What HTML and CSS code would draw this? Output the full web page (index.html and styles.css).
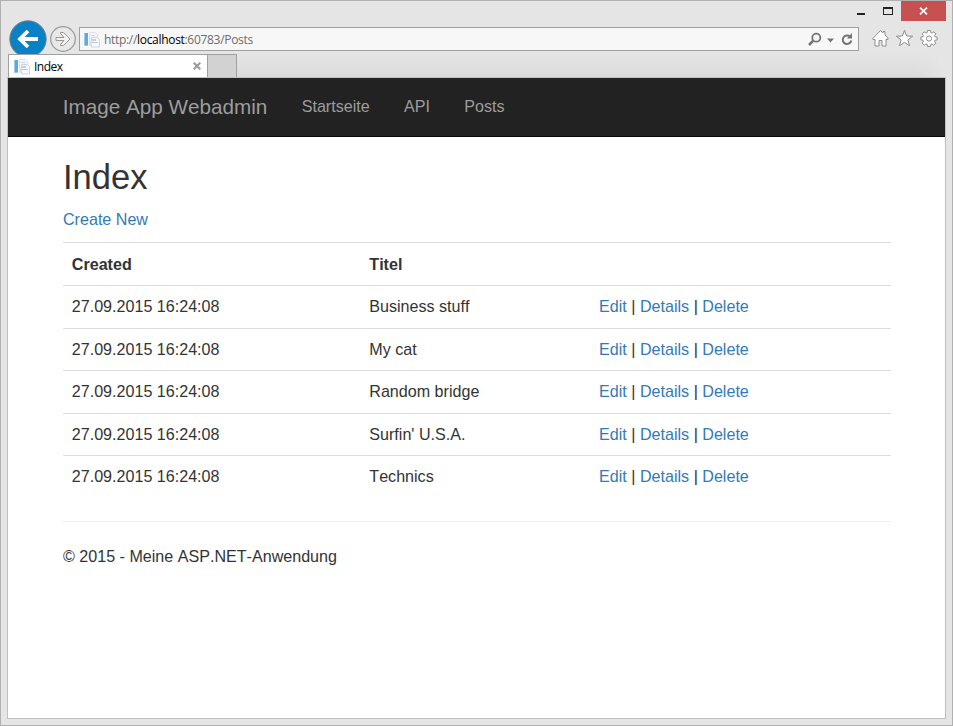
FILE: index.html
```html
<!DOCTYPE html>
<html lang="de">
<head>
<meta charset="utf-8">
<title>Index</title>
<link rel="stylesheet" href="styles.css">
</head>
<body>
<svg class="defs" width="0" height="0">
  <symbol id="doc" viewBox="0 0 16 16">
    <path d="M0 1h4v13H0z" fill="#9acbe9"/><path d="M1 1h3v12H1z" fill="#62a9da"/>
    <path d="M5.500 .5h6l2 2v11h-8z" fill="#f3f6fc" stroke="#dde3ee"/>
    <path d="M7 3.500h4" stroke="#ccd6e6"/>
    <path d="M7.500 5.500h6l2 2v7.500h-8z" fill="#f7f9fe" stroke="#cdd5e3"/>
    <path d="M8 7h4v2H8z" fill="#c3cee1"/>
    <path d="M8 10.500h6" stroke="#bcc8dc"/>
    <path d="M6 9.500h2v3H6z" fill="#d4dcea"/>
  </symbol>
</svg>
<div class="window">
  <div class="titlebar">
    <svg width="27" height="20" viewBox="0 0 27 20"><path d="M3 12h8v2H3z" fill="#222"/></svg>
    <svg width="20" height="20" viewBox="0 0 20 20"><path d="M2 6h10v8H2zM3 8v5h8V8z" fill="#222" fill-rule="evenodd"/></svg>
    <div class="close"><svg width="9" height="8" viewBox="0 0 9 8"><path d="M1 .7l7 6.600M8 .7L1 7.300" stroke="#fff" stroke-width="1.800"/></svg></div>
  </div>
  <div class="toolbar">
    <svg class="back" width="40" height="40" viewBox="0 0 40 40"><circle cx="20" cy="20" r="18.200" fill="#0882c4" stroke="#7a7f83"/><path d="M30 20H11.500M20 12l-8 8 8 8" fill="none" stroke="#fff" stroke-width="3.800"/></svg>
    <svg class="forward" width="28" height="28" viewBox="0 0 28 28"><circle cx="14" cy="14" r="12.300" fill="#e8e8e8" stroke="#999" stroke-width="1.200"/><path d="M7 12.500h8L11.500 8.500V7.500h3L21 14l-6.500 6.500h-3v-1l3.500-4H7z" fill="#f3f3f3" stroke="#999"/></svg>
    <div class="address">
      <svg class="favicon" width="16" height="16"><use href="#doc"/></svg>
      <span class="url">http://<b>localhost</b>:60783/Posts</span>
      <svg width="53" height="20" viewBox="0 0 53 20" fill="none" stroke="#757575"><circle cx="11.300" cy="8.700" r="4" stroke-width="1.800"/><path d="M8.200 11.700L4 16" stroke-width="2.600"/><path d="M22 9.500h7l-3.500 4z" fill="#757575" stroke="none"/><path d="M45 7.600A4.300 4.300 0 1 0 46.300 11.500" stroke-width="2"/><path d="M47 4v5.500h-5z" fill="#757575" stroke="none"/></svg>
    </div>
    <svg class="tools" width="68" height="20" viewBox="0 0 68 20" fill="#fdfdfd" stroke="#8e8e8e" stroke-linejoin="round">
      <path d="M.8 10.500L8.500 2.500l2.500 2.500V3.500h2v3.500l3 3v1.500h-2v6.500h-4V12.500h-3v5.500h-4V11.500h-2z"/>
      <path d="M32.500 2.300l2.100 5.700 6.100.2-4.800 3.700 1.700 5.900-5.100-3.400-5.100 3.400 1.700-5.900-4.800-3.700 6.100-.2z"/>
      <path d="M55.500 2.500h3l.4 2.200 1 .4 1.900-1.300 2 2-1.300 1.900.4 1 2.200.4v2.800l-2.200.4-.4 1 1.300 1.900-2 2-1.900-1.300-1 .4-.4 2.200h-3l-.4-2.200-1-.4-1.900 1.300-2-2 1.300-1.900-.4-1-2.200-.4V9.100l2.200-.4.4-1-1.300-1.900 2-2 1.900 1.300 1-.4z"/><circle cx="57" cy="10.500" r="2.600"/>
    </svg>
  </div>
  <div class="tabs">
    <div class="tab"><svg width="16" height="16"><use href="#doc"/></svg><span>Index</span><svg class="tabclose" width="8" height="8" viewBox="0 0 8 8"><path d="M.7.7l6.600 6.600M7.300.7L.7 7.300" stroke="#999" stroke-width="2"/></svg></div>
    <div class="newtab"></div>
    <div class="tabfill"></div>
  </div>
  <main class="viewport">
    <nav class="navbar">
      <a class="brand">Image App Webadmin</a>
      <a>Startseite</a>
      <a>API</a>
      <a>Posts</a>
    </nav>
    <div class="container">
      <h2>Index</h2>
      <p class="create"><a>Create New</a></p>
      <div class="table">
        <div class="row head"><span>Created</span><span>Titel</span><span></span></div>
        <div class="row"><span>27.09.2015 16:24:08</span><span>Business stuff</span><span><a>Edit</a> | <a>Details</a> | <a>Delete</a></span></div>
        <div class="row"><span>27.09.2015 16:24:08</span><span>My cat</span><span><a>Edit</a> | <a>Details</a> | <a>Delete</a></span></div>
        <div class="row"><span>27.09.2015 16:24:08</span><span>Random bridge</span><span><a>Edit</a> | <a>Details</a> | <a>Delete</a></span></div>
        <div class="row"><span>27.09.2015 16:24:08</span><span>Surfin' U.S.A.</span><span><a>Edit</a> | <a>Details</a> | <a>Delete</a></span></div>
        <div class="row"><span>27.09.2015 16:24:08</span><span>Technics</span><span><a>Edit</a> | <a>Details</a> | <a>Delete</a></span></div>
      </div>
      <footer>© 2015 - Meine ASP.NET-Anwendung</footer>
    </div>
  </main>
</div>
</body>
</html>
```
FILE: styles.css
```css
* { box-sizing: border-box; }
body { margin: 0; }
.defs { position: absolute; }
svg { display: block; flex: none; }
.window {
  width: 953px;
  height: 726px;
  border: 1px solid #b0b0b0;
  background: #e5e5e5;
  display: flex;
  flex-direction: column;
  font: 12px/16px "Open Sans", "Noto Sans", sans-serif;
  overflow: hidden;
}
.titlebar { height: 20px; display: flex; justify-content: flex-end; padding-right: 6px; flex: none; }
.close { width: 45px; height: 20px; background: #c75050; display: flex; align-items: center; justify-content: center; }
.toolbar { height: 33px; display: flex; align-items: flex-start; padding-left: 7px; flex: none; }
.back { margin-top: -2px; }
.forward { margin: 4px 2px 0 1px; }
.address {
  width: 780px;
  height: 24px;
  margin-top: 6px;
  border: 1px solid #a0a0a0;
  background: #f7f7f7;
  display: flex;
  align-items: center;
}
.favicon { margin: 1px 4px 0 4px; }
.url { flex: 1; color: #6d6d6d; letter-spacing: -0.310px; padding-top: 2px; }
.url b { font-weight: normal; color: #000; }
.tools { margin: 7px 0 0 13px; }
.tabs { height: 24px; margin: 0 7px; display: flex; flex: none; }
.tab {
  width: 200px;
  border: 1px solid #a0a0a0;
  border-bottom: 0;
  background: #fff;
  display: flex;
  align-items: center;
  padding: 0 6px 0 5px;
  color: #000;
  letter-spacing: -0.5px;
}
.tab span { margin-left: 4px; flex: 1; }
.tabclose { margin-bottom: 1px; }
.newtab { width: 29px; border: 1px solid #a0a0a0; border-left: 0; border-bottom: 0; background: #d2d2d2; }
.tabfill {
  flex: 1;
  background: linear-gradient(to right, transparent 96%, #e5e5e5), linear-gradient(#e5e5e5, #dadada);
}
.viewport {
  height: 642px;
  margin: -1px 6px 0;
  border: 1px solid #c0c0c0;
  background: #fff;
  color: #333;
  font: 16.1px/23px "Liberation Sans", Arial, sans-serif;
  font-kerning: none;
}
.navbar {
  height: 59px;
  background: #222;
  border-bottom: 1px solid #080808;
  display: flex;
  align-items: center;
  gap: 34.300px;
  padding: 0 0 2px 54.700px;
  color: #9d9d9d;
}
.brand { font-size: 20.700px; }
.container { padding: 0 54px 0 55px; }
h2 { margin: 21px 0 0; font-size: 34.500px; line-height: 38px; font-weight: normal; }
.create { margin: 12px 0 11.400px; }
.container a { color: #337ab7; }
.row {
  height: 42.600px;
  border-top: 1px solid #ddd;
  padding: 9.100px 9px 0 8.800px;
  display: grid;
  grid-template-columns: 297.500px 229.800px 1fr;
}
.head { font-weight: bold; padding-top: 10px; }
footer { margin-top: 23px; border-top: 1px solid #eee; padding-top: 23px; }
```
